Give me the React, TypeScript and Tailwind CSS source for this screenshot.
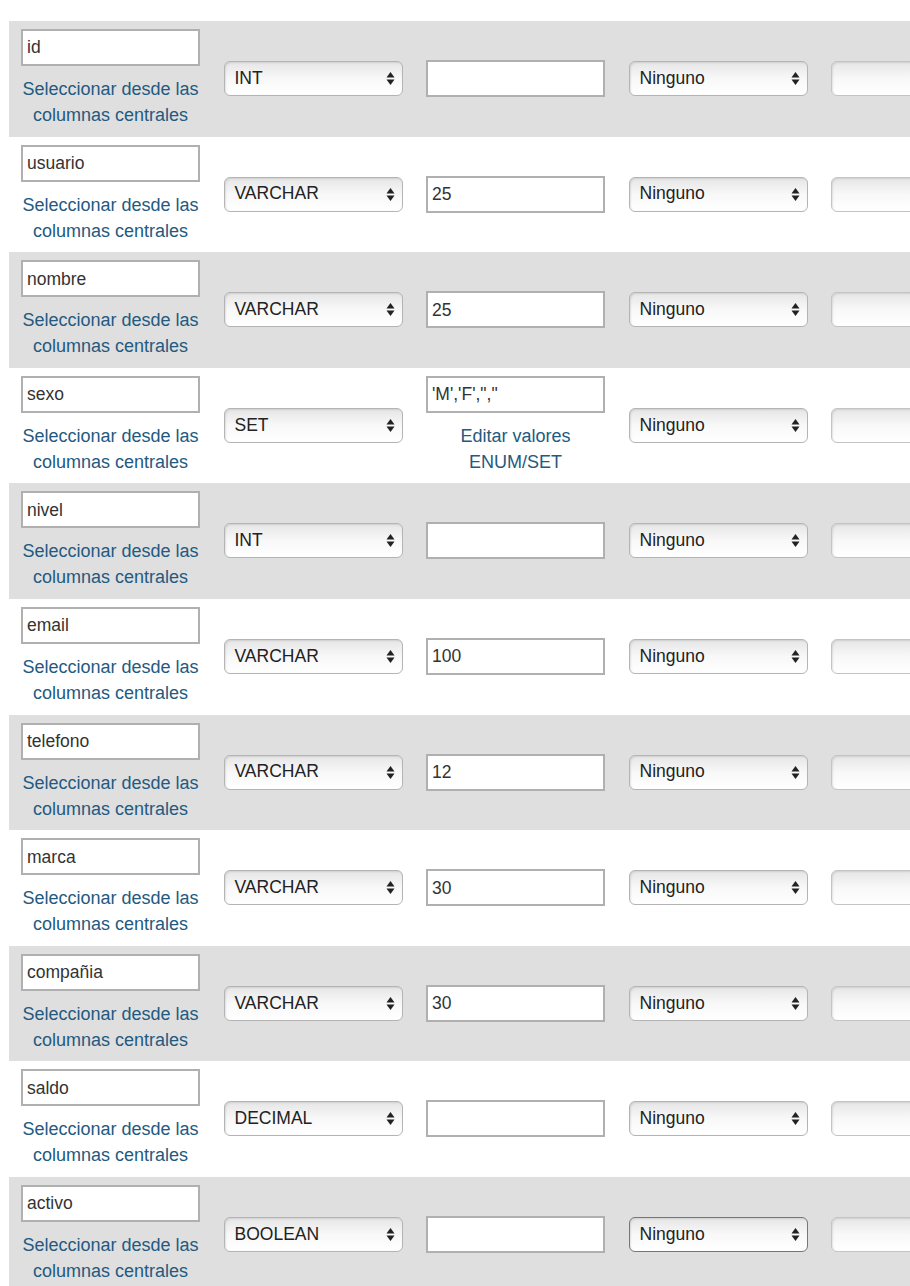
const rows = [
  { name: "id", type: "INT", length: "" },
  { name: "usuario", type: "VARCHAR", length: "25" },
  { name: "nombre", type: "VARCHAR", length: "25" },
  { name: "sexo", type: "SET", length: "'M','F',\",\"", enumLink: true },
  { name: "nivel", type: "INT", length: "" },
  { name: "email", type: "VARCHAR", length: "100" },
  { name: "telefono", type: "VARCHAR", length: "12" },
  { name: "marca", type: "VARCHAR", length: "30" },
  { name: "compañia", type: "VARCHAR", length: "30" },
  { name: "saldo", type: "DECIMAL", length: "" },
  { name: "activo", type: "BOOLEAN", length: "", focused: true },
];

function Arrows() {
  return (
    <svg width="9" height="15" viewBox="0 0 9 15" className="shrink-0">
      <path d="M4.5 1 L8.5 6.5 H0.5 Z" fill="#222" />
      <path d="M4.5 14 L8.5 8.5 H0.5 Z" fill="#222" />
    </svg>
  );
}

function Select({ value, focused, wide }: { value: string; focused?: boolean; wide?: boolean }) {
  return (
    <div
      className={`flex items-center justify-between h-[35px] pl-[10px] pr-[7px] rounded-[6px] border bg-gradient-to-b from-[#e6e6e6] via-[#f8f8f8] to-white shadow-[inset_1px_1px_2px_rgba(0,0,0,0.1)] ${
        wide ? "w-[120px] border-[#c4c4c4]" : "w-[179px]"
      } ${focused ? "border-[#777] border-[1.5px]" : wide ? "" : "border-[#b4b4b4]"}`}
    >
      <span className="text-[17.5px] text-[#222] leading-none">{value}</span>
      {!wide && <Arrows />}
    </div>
  );
}

function TextBox({ value }: { value: string }) {
  return (
    <div className="w-[179px] h-[37px] border-2 border-[#b0b0b0] bg-white flex items-center px-[4px] text-[17.5px] text-[#333]">
      {value}
    </div>
  );
}

export default function App() {
  return (
    <div
      className="w-[910px] h-[1286px] overflow-hidden bg-white pt-[21px] pl-[9px]"
      style={{ fontFamily: '"Liberation Sans", Arial, sans-serif' }}
    >
      {rows.map((row, i) => (
        <div
          key={row.name}
          className={`flex items-center gap-[23.5px] pl-[12px] pt-[8px] pb-[8.6px] ${
            i % 2 === 0 ? "bg-[#dfdfdf]" : "bg-white"
          }`}
        >
          <div className="flex flex-col w-[179px] shrink-0">
            <TextBox value={row.name} />
            <div className="mt-[10px] text-center text-[18px] leading-[26px] text-[#235a81]">
              Seleccionar desde las
              <br />
              columnas centrales
            </div>
          </div>
          <div className="shrink-0">
            <Select value={row.type} />
          </div>
          {row.enumLink ? (
            <div className="shrink-0 flex flex-col self-start">
              <TextBox value={row.length} />
              <div className="mt-[10px] text-center text-[18px] leading-[26px] text-[#235a81]">
                Editar valores
                <br />
                ENUM/SET
              </div>
            </div>
          ) : (
            <div className="shrink-0">
              <TextBox value={row.length} />
            </div>
          )}
          <div className="shrink-0">
            <Select value="Ninguno" focused={row.focused} />
          </div>
          <div className="shrink-0">
            <Select value="" wide />
          </div>
        </div>
      ))}
    </div>
  );
}
